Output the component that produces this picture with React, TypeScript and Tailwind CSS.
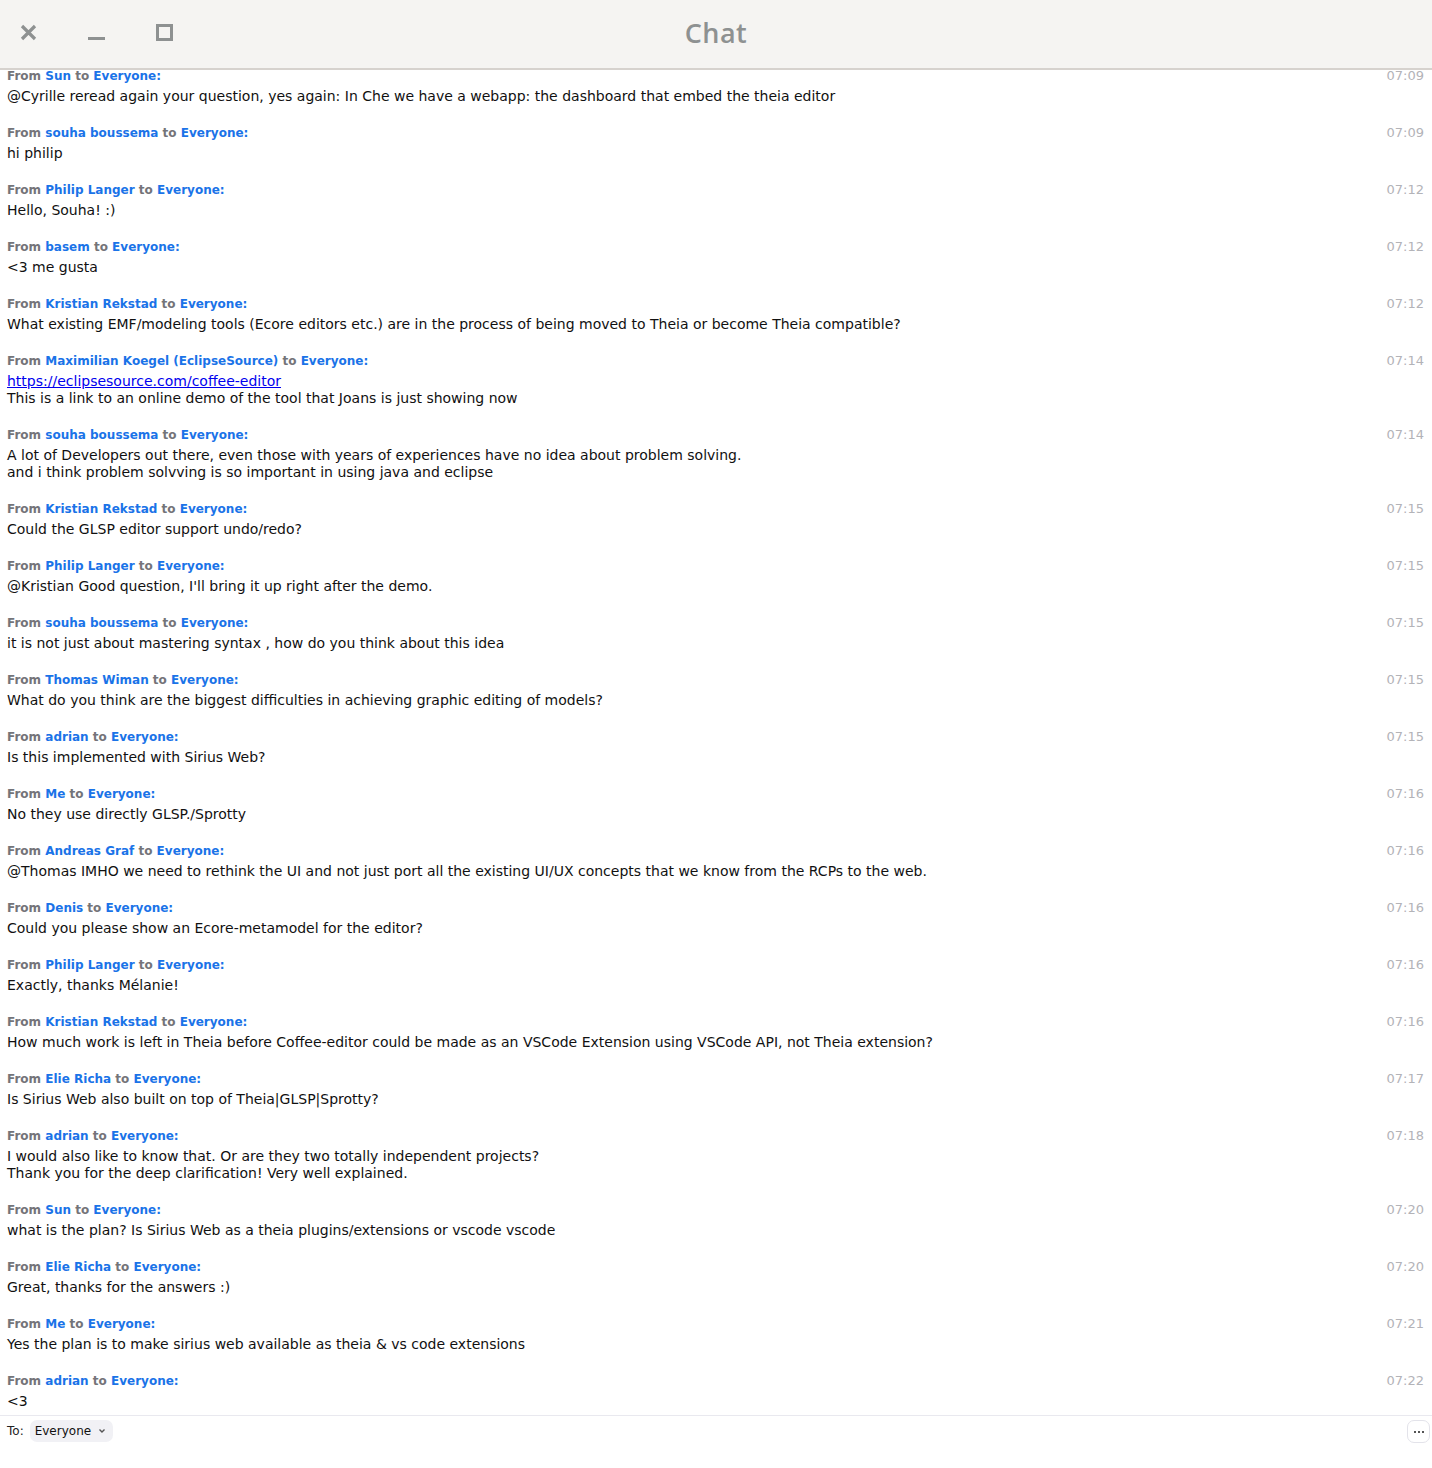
import React from 'react';

type Msg = { from: string; time: string; lines: string[]; link?: string };

const messages: Msg[] = [
  { from: 'Sun', time: '07:09', lines: ['@Cyrille reread again your question, yes again: In Che we have a webapp: the dashboard that embed the theia editor'] },
  { from: 'souha boussema', time: '07:09', lines: ['hi philip'] },
  { from: 'Philip Langer', time: '07:12', lines: ['Hello, Souha! :)'] },
  { from: 'basem', time: '07:12', lines: ['<3 me gusta'] },
  { from: 'Kristian Rekstad', time: '07:12', lines: ['What existing EMF/modeling tools (Ecore editors etc.) are in the process of being moved to Theia or become Theia compatible?'] },
  { from: 'Maximilian Koegel (EclipseSource)', time: '07:14', link: 'https://eclipsesource.com/coffee-editor', lines: ['This is a link to an online demo of the tool that Joans is just showing now'] },
  { from: 'souha boussema', time: '07:14', lines: ['A lot of Developers out there, even those with years of experiences have no idea about problem solving.', 'and i think problem solvving is so important in using java and eclipse'] },
  { from: 'Kristian Rekstad', time: '07:15', lines: ['Could the GLSP editor support undo/redo?'] },
  { from: 'Philip Langer', time: '07:15', lines: ["@Kristian Good question, I'll bring it up right after the demo."] },
  { from: 'souha boussema', time: '07:15', lines: ['it is not just about mastering syntax , how do you think about this idea'] },
  { from: 'Thomas Wiman', time: '07:15', lines: ['What do you think are the biggest difficulties in achieving graphic editing of models?'] },
  { from: 'adrian', time: '07:15', lines: ['Is this implemented with Sirius Web?'] },
  { from: 'Me', time: '07:16', lines: ['No they use directly GLSP./Sprotty'] },
  { from: 'Andreas Graf', time: '07:16', lines: ['@Thomas IMHO we need to rethink the UI and not just port all the existing UI/UX concepts that we know from the RCPs to the web.'] },
  { from: 'Denis', time: '07:16', lines: ['Could you please show an Ecore-metamodel for the editor?'] },
  { from: 'Philip Langer', time: '07:16', lines: ['Exactly, thanks Mélanie!'] },
  { from: 'Kristian Rekstad', time: '07:16', lines: ['How much work is left in Theia before Coffee-editor could be made as an VSCode Extension using VSCode API, not Theia extension?'] },
  { from: 'Elie Richa', time: '07:17', lines: ['Is Sirius Web also built on top of Theia|GLSP|Sprotty?'] },
  { from: 'adrian', time: '07:18', lines: ['I would also like to know that. Or are they two totally independent projects?', 'Thank you for the deep clarification! Very well explained.'] },
  { from: 'Sun', time: '07:20', lines: ['what is the plan? Is Sirius Web as a theia plugins/extensions or vscode vscode'] },
  { from: 'Elie Richa', time: '07:20', lines: ['Great, thanks for the answers :)'] },
  { from: 'Me', time: '07:21', lines: ['Yes the plan is to make sirius web available as theia & vs code extensions'] },
  { from: 'adrian', time: '07:22', lines: ['<3'] },
];

const App = () => {
  return (
    <div className="w-[1432px] h-[1468px] bg-white flex flex-col overflow-hidden font-['DejaVu_Sans',sans-serif]">
      {/* title bar */}
      <div className="h-[70px] shrink-0 bg-[#f5f4f2] border-b-2 border-[#d6d2ce] flex items-center relative">
        <div className="flex items-center h-full pl-[20px] gap-[51px]">
          <svg width="17" height="17" viewBox="0 0 17 17" className="mt-[-4px]">
            <path d="M2 2 L15 15 M15 2 L2 15" stroke="#8e9191" strokeWidth="3.2" />
          </svg>
          <div className="w-[17px] h-[3px] bg-[#8e9191] mt-[8px]" />
          <div className="w-[17px] h-[17px] border-[3px] border-[#8e9191] mt-[-4px]" />
        </div>
        <div className="absolute left-0 right-0 top-0 h-full flex items-center justify-center pb-[2px]">
          <span className="text-[27px] font-semibold text-[#8e9191] font-['Open_Sans',sans-serif] tracking-[0.5px]">Chat</span>
        </div>
      </div>

      {/* messages */}
      <div className="flex-1 overflow-hidden pl-[7px] pr-[8px]">
        {messages.map((m, i) => (
          <div key={i} className="pb-[22px]">
            <div className="flex justify-between items-baseline h-[18px] text-[12px] leading-[12px]">
              <div className="font-bold">
                <span className="text-[#747479]">From </span>
                <span className="text-[#1a73e8]">{m.from}</span>
                <span className="text-[#747479]"> to </span>
                <span className="text-[#1a73e8]">Everyone:</span>
              </div>
              <span className="text-[#b3b3b8] text-[13px] leading-[12px]">{m.time}</span>
            </div>
            <div className="text-[14px] leading-[17px] text-[#111]">
              {m.link && (
                <div>
                  <a href="#" className="text-[#0000ee] underline">{m.link}</a>
                </div>
              )}
              {m.lines.map((l, j) => (
                <div key={j}>{l}</div>
              ))}
            </div>
          </div>
        ))}
      </div>

      {/* footer */}
      <div className="h-[53px] shrink-0 border-t border-[#e9e9ef] flex items-start justify-between pt-[4px] pl-[7px] pr-[2px]">
        <div className="flex items-center gap-[6px] h-[22px] text-[12px]">
          <span className="text-[#222]">To:</span>
          <div className="flex items-center h-[22px] rounded-[7px] bg-[#f1f1f5] pl-[5px] pr-[7px] gap-[7px] text-[#111]">
            <span>Everyone</span>
            <svg width="8" height="6" viewBox="0 0 8 6">
              <path d="M1.5 1.5 L4 4 L6.5 1.5" stroke="#555" strokeWidth="1.4" fill="none" />
            </svg>
          </div>
        </div>
        <div className="w-[23px] h-[23px] rounded-[7px] border border-[#e3e3ea] flex items-center justify-center gap-[2px]">
          <span className="w-[2px] h-[2px] bg-[#555]" />
          <span className="w-[2px] h-[2px] bg-[#555]" />
          <span className="w-[2px] h-[2px] bg-[#555]" />
        </div>
      </div>
    </div>
  );
};

export default App;
